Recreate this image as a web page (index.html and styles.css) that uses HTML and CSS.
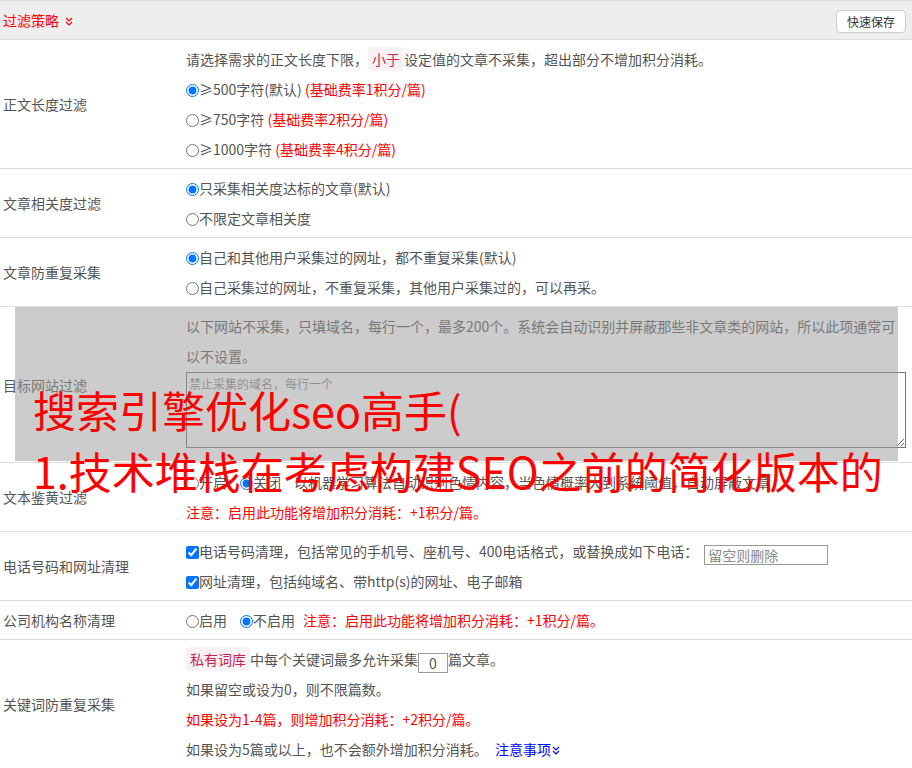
FILE: index.html
```html
<!DOCTYPE html>
<html lang="zh-CN">
<head>
    <meta charset="UTF-8">
    <title>过滤策略</title>
    <link rel="stylesheet" href="styles.css">
</head>
<body>

    <!-- 过滤策略 -->
    <div class="panel">
        <div class="panel-head">
            <span class="panel-title">过滤策略<svg class="chev" width="8" height="9" viewBox="0 0 8 9"><polyline points="1,1 4,4 7,1"/><polyline points="1,5 4,8 7,5"/></svg></span>
            <button class="btn-save">快速保存</button>
        </div>

        <div class="row">
            <div class="row-label">正文长度过滤</div>
            <div class="row-body">
                <div class="line">请选择需求的正文长度下限，<code>小于</code>设定值的文章不采集，超出部分不增加积分消耗。</div>
                <div class="line"><label><input type="radio" name="len" checked>≥500字符(默认)</label> <span class="warn">(基础费率1积分/篇)</span></div>
                <div class="line"><label><input type="radio" name="len">≥750字符</label> <span class="warn">(基础费率2积分/篇)</span></div>
                <div class="line"><label><input type="radio" name="len">≥1000字符</label> <span class="warn">(基础费率4积分/篇)</span></div>
            </div>
        </div>

        <div class="row">
            <div class="row-label">文章相关度过滤</div>
            <div class="row-body">
                <div class="line"><label><input type="radio" name="rel" checked>只采集相关度达标的文章(默认)</label></div>
                <div class="line"><label><input type="radio" name="rel">不限定文章相关度</label></div>
            </div>
        </div>

        <div class="row">
            <div class="row-label">文章防重复采集</div>
            <div class="row-body">
                <div class="line"><label><input type="radio" name="dup" checked>自己和其他用户采集过的网址，都不重复采集(默认)</label></div>
                <div class="line"><label><input type="radio" name="dup">自己采集过的网址，不重复采集，其他用户采集过的，可以再采。</label></div>
            </div>
        </div>

        <div class="row">
            <div class="row-label">目标网站过滤</div>
            <div class="row-body">
                <div class="line">以下网站不采集，只填域名，每行一个，最多200个。系统会自动识别并屏蔽那些非文章类的网站，所以此项通常可以不设置。</div>
                <textarea class="domain-box" placeholder="禁止采集的域名，每行一个"></textarea>
            </div>
        </div>

        <div class="row">
            <div class="row-label">文本鉴黄过滤</div>
            <div class="row-body">
                <div class="line"><label class="opt"><input type="radio" name="porn">开启</label><label class="opt"><input type="radio" name="porn" checked>关闭</label>以机器学习算法自动识别色情内容，当色情概率大到系统阈值，自动屏蔽文章</div>
                <div class="line warn">注意：启用此功能将增加积分消耗：+1积分/篇。</div>
            </div>
        </div>

        <div class="row">
            <div class="row-label">电话号码和网址清理</div>
            <div class="row-body">
                <div class="line"><label><input type="checkbox" checked>电话号码清理，包括常见的手机号、座机号、400电话格式，或替换成如下电话：</label><input type="text" class="phone-input" placeholder="留空则删除"></div>
                <div class="line"><label><input type="checkbox" checked>网址清理，包括纯域名、带http(s)的网址、电子邮箱</label></div>
            </div>
        </div>

        <div class="row">
            <div class="row-label">公司机构名称清理</div>
            <div class="row-body">
                <div class="line"><label class="opt"><input type="radio" name="corp">启用</label><label class="opt"><input type="radio" name="corp" checked>不启用</label><span class="warn note">注意：启用此功能将增加积分消耗：+1积分/篇。</span></div>
            </div>
        </div>

        <div class="row">
            <div class="row-label">关键词防重复采集</div>
            <div class="row-body">
                <div class="line"><code>私有词库</code>中每个关键词最多允许采集<input type="text" class="num-input" value="0">篇文章。</div>
                <div class="line">如果留空或设为0，则不限篇数。</div>
                <div class="line warn">如果设为1-4篇，则增加积分消耗：+2积分/篇。</div>
                <div class="line">如果设为5篇或以上，也不会额外增加积分消耗。 <a class="more" href="#">注意事项<svg class="chev" width="8" height="9" viewBox="0 0 8 9"><polyline points="1,1 4,4 7,1"/><polyline points="1,5 4,8 7,5"/></svg></a></div>
            </div>
        </div>
    </div>

    <!-- 遮罩和标题 -->
    <div class="mask"></div>
    <div class="ad-title">搜索引擎优化seo高手(<br>1.技术堆栈在考虑构建SEO之前的简化版本的</div>

</body>
</html>
```

FILE: styles.css
```css
body {
    margin: 0;
    font-family: "Microsoft YaHei", "Noto Sans CJK SC", sans-serif;
    font-size: 14px;
    color: #555;
    background: #fff;
    position: relative;
}

.panel-head {
    display: flex;
    justify-content: space-between;
    align-items: center;
    height: 38px;
    background-color: #eee;
    border-top: 1px solid #ddd;
    border-bottom: 1px solid #ddd;
    padding: 0 6px 0 3px;
}

.panel-title {
    color: #f00;
    font-size: 14px;
}

.chev {
    fill: none;
    stroke: currentColor;
    stroke-width: 1.2;
    margin-left: 6px;
    vertical-align: 0;
}

.btn-save {
    font-family: inherit;
    font-size: 12px;
    color: #333;
    background: #fff;
    border: 1px solid #ccc;
    border-radius: 4px;
    height: 23px;
    width: 70px;
    padding: 0;
    margin-top: 2px;
    cursor: pointer;
}

.row {
    display: grid;
    grid-template-columns: 186px 1fr;
    border-bottom: 1px solid #ddd;
}

.row-label {
    align-self: center;
    padding-left: 3px;
}

.row-body {
    padding: 4px 6px 4px 0;
}

.line {
    line-height: 30px;
}

input[type="radio"],
input[type="checkbox"] {
    width: 13px;
    height: 13px;
    margin: 0;
    vertical-align: -2px;
}

.opt {
    margin-right: 13px;
}

.note {
    margin-left: -5px;
}

.warn {
    color: #f00;
}

code {
    font-family: inherit;
    font-size: 14px;
    color: #c7254e;
    background-color: #f9f2f4;
    padding: 2px 4px;
    border-radius: 4px;
}

.domain-box {
    display: block;
    box-sizing: border-box;
    width: 720px;
    height: 76px;
    margin: 1px 0 10px;
    border: 1px solid #767676;
    padding: 2px;
    font-family: inherit;
    font-size: 12px;
    resize: vertical;
}

.domain-box::placeholder {
    color: #888;
}

.phone-input {
    box-sizing: border-box;
    width: 124px;
    height: 20px;
    margin-left: 6px;
    padding: 0 3px;
    border: 1px solid #999;
    font-family: inherit;
    font-size: 14px;
    vertical-align: -4px;
}

.phone-input::placeholder {
    color: #888;
}

.num-input {
    box-sizing: border-box;
    width: 30px;
    height: 20px;
    padding: 0;
    border: 1px solid #999;
    text-align: center;
    font-family: inherit;
    font-size: 14px;
    color: #555;
    vertical-align: -4px;
}

.more {
    color: #00f;
    text-decoration: none;
    margin-left: 4px;
}

.more .chev {
    margin-left: 1px;
}

.mask {
    position: absolute;
    top: 307px;
    left: 15px;
    width: 883px;
    height: 154px;
    background-color: rgba(153, 153, 153, 0.5);
}

.ad-title {
    position: absolute;
    top: 379px;
    left: 33px;
    font-size: 43px;
    line-height: 61px;
    color: #f00;
    white-space: nowrap;
}
```
